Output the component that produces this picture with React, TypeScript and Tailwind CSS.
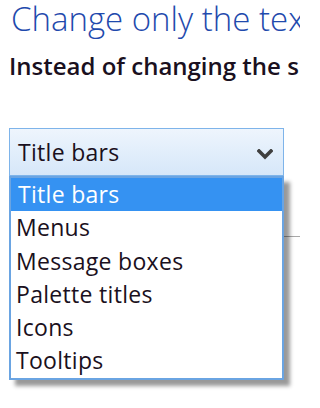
import React from 'react';

const items = ['Title bars', 'Menus', 'Message boxes', 'Palette titles', 'Icons', 'Tooltips'];

const App = () => {
  const selected = 0;

  return (
    <div
      className="relative w-[300px] h-[408px] overflow-hidden bg-white"
      style={{ fontFamily: '"Open Sans", "Noto Sans", sans-serif' }}
    >
      {/* Heading */}
      <h1 className="ml-[11px] mt-[-4px] text-[33px] leading-[45px] font-light text-[#1f4aad] whitespace-nowrap">
        Change only the text size
      </h1>
      <p className="ml-[9px] mt-[9px] text-[24px] leading-[32px] font-semibold text-[#1a1020] whitespace-nowrap">
        Instead of changing the size of everything on the desktop, change only the text size for a specific item.
      </p>

      {/* Select box */}
      <div className="relative ml-[9px] mt-[46px] w-[275px]">
        <div className="h-[48px] border border-[#7eb4ea] bg-gradient-to-b from-[#eef5fd] to-[#d6e7f9] flex items-center justify-between pl-[8px] pr-[10px]">
          <span className="text-[23px] leading-[30px] tracking-[0.3px] text-[#1a1020]">Title bars</span>
          <svg width="16" height="11" viewBox="0 0 16 11" className="mt-[4px]">
            <polyline points="2,2 8,8 14,2" fill="none" stroke="#3f3f3f" strokeWidth="3.6" strokeLinecap="square" />
          </svg>
        </div>

        {/* Open list */}
        <ul className="absolute left-0 top-[48px] z-10 w-[275px] bg-white border-2 border-[#6aa4e2] shadow-[6px_6px_4px_rgba(0,0,0,0.4)]">
          {items.map((item, idx) => (
            <li
              key={item}
              className={`h-[33.3px] leading-[33.3px] text-[23px] tracking-[0.3px] whitespace-nowrap ${
                idx === selected ? 'bg-[#3592f2] text-white pl-[7px]' : 'text-[#1a1020] pl-[5px]'
              }`}
            >
              {item}
            </li>
          ))}
        </ul>
      </div>

      {/* Separator under the select, partly hidden by the list */}
      <div className="mt-[60px] ml-[20px] border-t border-[#a8a8a8]" />
    </div>
  );
};

export default App;
